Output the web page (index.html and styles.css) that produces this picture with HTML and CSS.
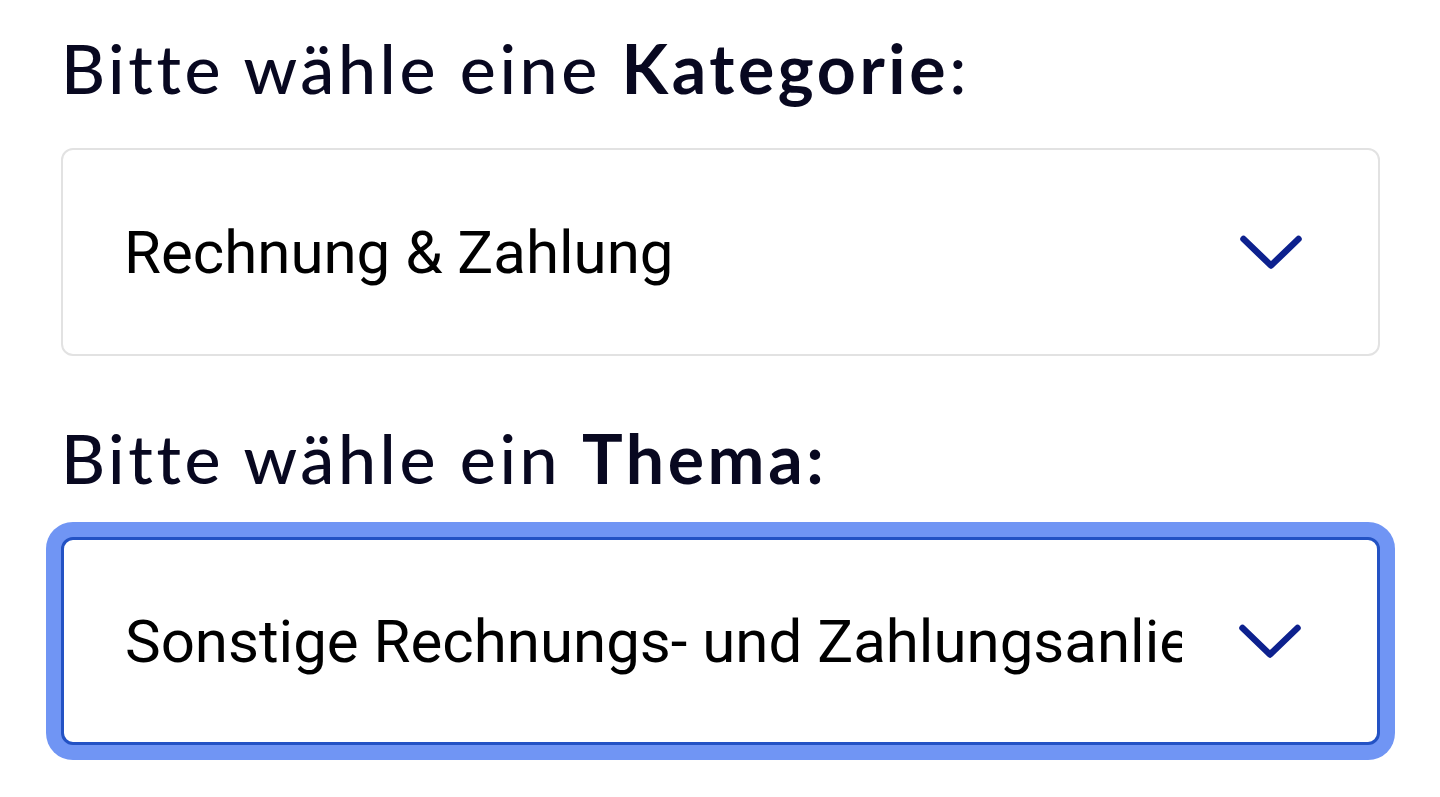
FILE: index.html
```html
<!DOCTYPE html>
<html lang="de">
<head>
<meta charset="utf-8">
<title>Kategorie und Thema</title>
<link rel="stylesheet" href="styles.css">
</head>
<body>
<main class="form">
  <h2 class="label">Bitte wähle eine <strong>Kategorie</strong>:</h2>
  <div class="select">
    <span class="value">Rechnung &amp; Zahlung</span>
    <svg class="chevron" width="62" height="34" viewBox="0 0 62 34" aria-hidden="true">
      <polyline points="3.5,4 31,30.5 58.5,4" fill="none" stroke="#0d218e" stroke-width="6.5" stroke-linecap="round" stroke-linejoin="round"/>
    </svg>
  </div>
  <h2 class="label label-second">Bitte wähle ein <strong>Thema:</strong></h2>
  <div class="select select-focused">
    <span class="value">Sonstige Rechnungs- und Zahlungsanliegen</span>
    <svg class="chevron" width="62" height="34" viewBox="0 0 62 34" aria-hidden="true">
      <polyline points="3.5,4 31,30.5 58.5,4" fill="none" stroke="#0d218e" stroke-width="6.5" stroke-linecap="round" stroke-linejoin="round"/>
    </svg>
  </div>
</main>
</body>
</html>
```
FILE: styles.css
```css
html, body {
  margin: 0;
  padding: 0;
  background: #ffffff;
}

.form {
  display: flex;
  flex-direction: column;
  padding: 27px 60px 40px 61px;
}

.label {
  margin: 0;
  font-family: Lato, "Open Sans", sans-serif;
  font-size: 68px;
  line-height: 82px;
  font-weight: 500;
  letter-spacing: 3.6px;
  color: #080820;
}

.label strong {
  font-weight: 700;
}

.label-second {
  margin-top: 61px;
}

.select {
  margin-top: 39px;
  box-sizing: border-box;
  height: 208px;
  display: flex;
  align-items: center;
  border: 2.5px solid #e2e2e2;
  border-radius: 12px;
  padding: 0 76px 0 61px;
  background: #fff;
}

.select-focused {
  margin-top: 38px;
  border: 3px solid #2352c4;
  box-shadow: 0 0 0 15px #7095f4;
  border-radius: 12px;
}

.value {
  flex: 1;
  min-width: 0;
  overflow: hidden;
  white-space: nowrap;
  margin-right: 57px;
  font-family: Roboto, "Liberation Sans", sans-serif;
  font-size: 60px;
  color: #000;
}

.chevron {
  flex: none;
  display: block;
}
```
